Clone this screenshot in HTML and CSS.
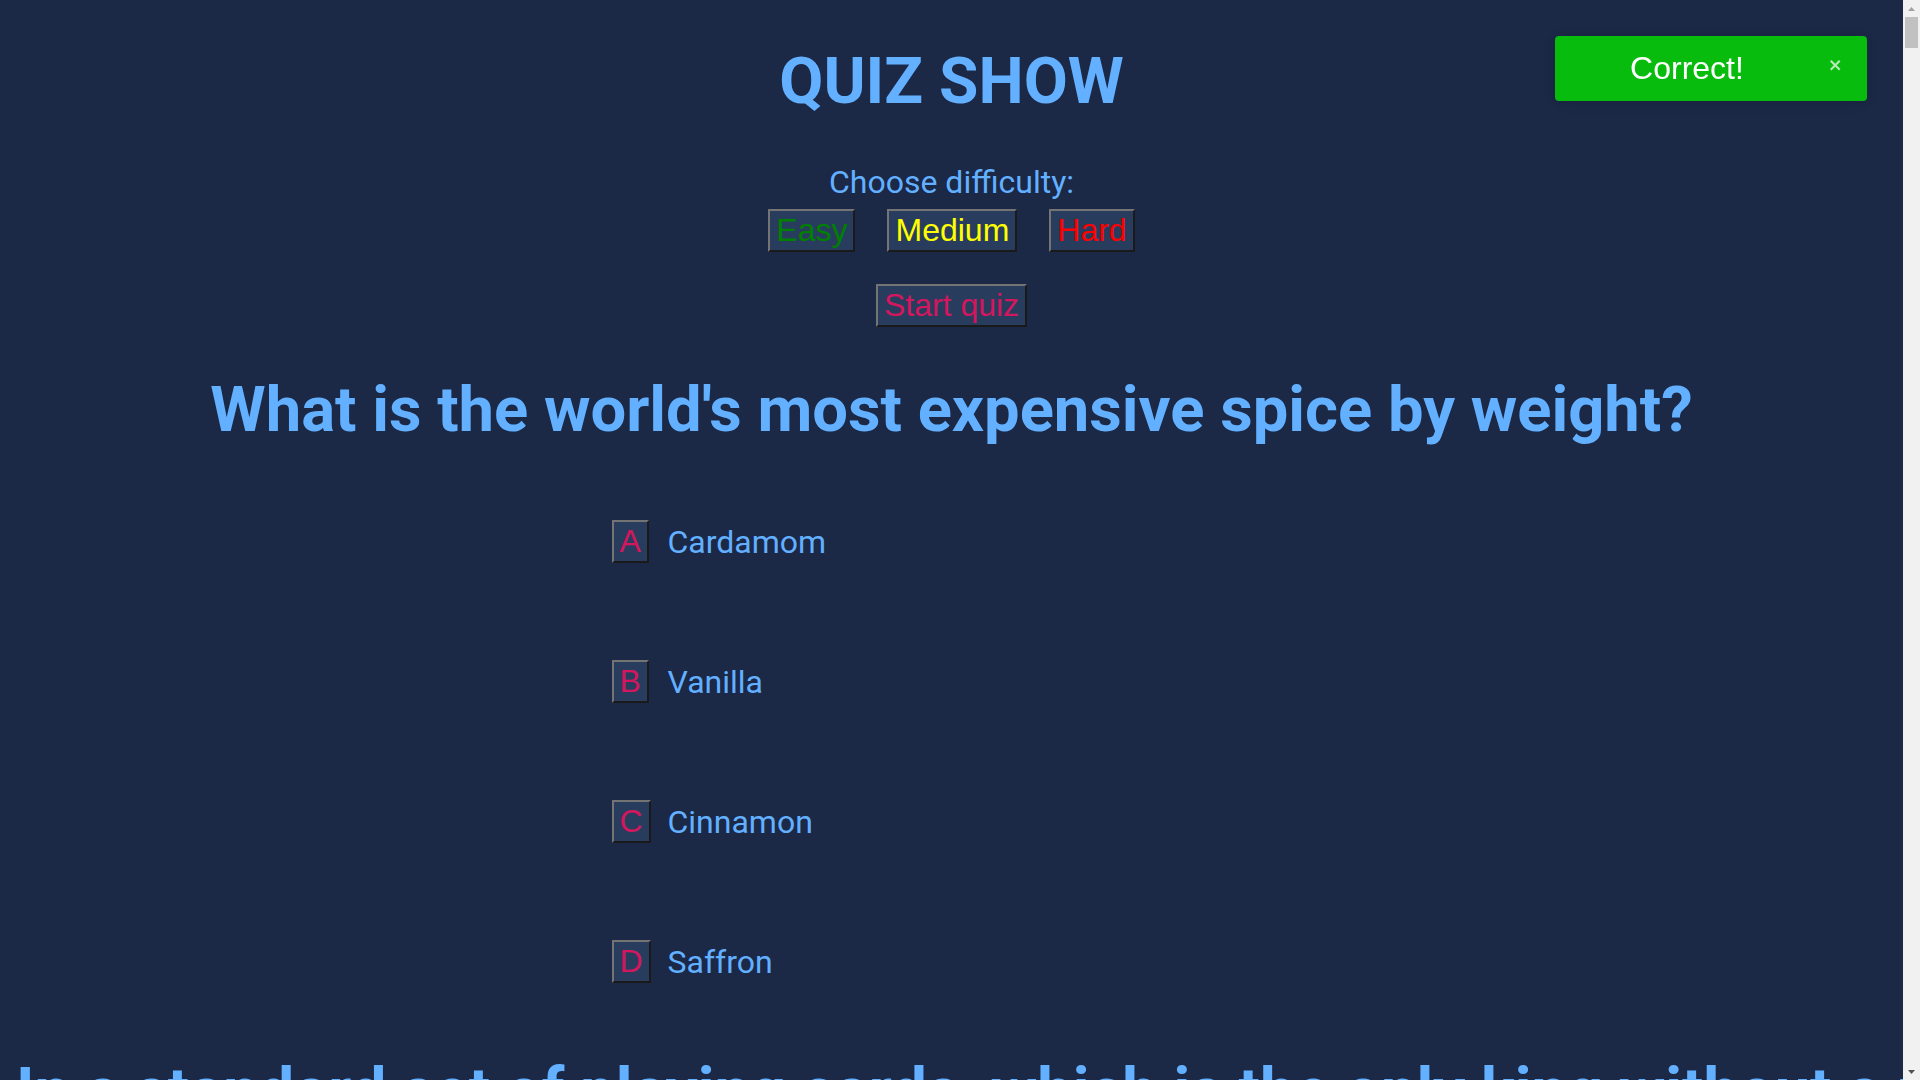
FILE: index.html
```html
<!DOCTYPE html>
<html lang="en">
<head>
<meta charset="utf-8">
<title>Quiz Show</title>
<link rel="stylesheet" href="styles.css">
</head>
<body>
<div class="app">
  <header class="top">
    <h1 class="title">QUIZ SHOW</h1>
    <p class="choose">Choose difficulty:</p>
    <div class="levels">
      <button class="btn easy">Easy</button>
      <button class="btn medium">Medium</button>
      <button class="btn hard">Hard</button>
    </div>
    <button class="btn start">Start quiz</button>
  </header>

  <div class="questions">
    <section class="q">
      <h2 class="q-text">What is the world's most expensive spice by weight?</h2>
      <ul class="answers">
        <li class="answer"><button class="btn letter">A</button><span class="answer-text">Cardamom</span></li>
        <li class="answer"><button class="btn letter">B</button><span class="answer-text">Vanilla</span></li>
        <li class="answer"><button class="btn letter">C</button><span class="answer-text">Cinnamon</span></li>
        <li class="answer"><button class="btn letter">D</button><span class="answer-text">Saffron</span></li>
      </ul>
    </section>
    <section class="q">
      <h2 class="q-text">In a standard set of playing cards, which is the only king without a moustache?</h2>
      <ul class="answers">
        <li class="answer"><button class="btn letter">A</button><span class="answer-text">Spades</span></li>
        <li class="answer"><button class="btn letter">B</button><span class="answer-text">Clubs</span></li>
        <li class="answer"><button class="btn letter">C</button><span class="answer-text">Diamonds</span></li>
        <li class="answer"><button class="btn letter">D</button><span class="answer-text">Hearts</span></li>
      </ul>
    </section>
  </div>
</div>

<div class="toast" role="alert">
  <div class="toast-body">Correct!</div>
  <button class="toast-close" aria-label="close">
    <svg width="14" height="16" viewBox="0 0 14 16" aria-hidden="true"><path fill="#ffffff" fill-rule="evenodd" d="M7.71 8.23l3.75 3.75-1.48 1.48-3.75-3.75-3.75 3.75L1 11.98l3.75-3.75L1 4.48 2.48 3l3.75 3.75L9.98 3l1.48 1.48-3.75 3.75z"/></svg>
  </button>
</div>

<div class="scrollbar" aria-hidden="true">
  <div class="sb-btn">
    <svg width="7" height="4" viewBox="0 0 7 4"><polygon points="0,4 3.5,0 7,4" fill="#a3a3a3"/></svg>
  </div>
  <div class="sb-thumb"></div>
  <div class="sb-track"></div>
  <div class="sb-btn">
    <svg width="7" height="4" viewBox="0 0 7 4"><polygon points="0,0 7,0 3.5,4" fill="#505050"/></svg>
  </div>
</div>
</body>
</html>
```

FILE: styles.css
```css
html, body {
  background: #1b2846;
}

body {
  margin: 0;
  padding-right: 17px;
  font-family: Roboto, "Liberation Sans", Arial, sans-serif;
  color: #62b0ff;
}

.app {
  overflow: hidden;
}

.top {
  display: flex;
  flex-direction: column;
  align-items: center;
}

.title {
  margin: 42px 0 0;
  font-size: 64px;
  line-height: 80px;
  font-weight: 700;
}

.choose {
  margin: 41px 0 0;
  font-size: 32px;
  line-height: 38px;
}

.levels {
  margin-top: 8px;
  display: flex;
  gap: 32px;
}

.btn {
  font-family: "Liberation Sans", Arial, sans-serif;
  font-size: 32px;
  line-height: 37px;
  padding: 1px 6px;
  margin: 0;
  background: #283d5e;
  border: 2px solid;
  border-color: #747474 #1a1a1a #1a1a1a #747474;
  border-radius: 0;
  cursor: pointer;
}

.easy { color: #008000; }
.medium { color: #ffff00; }
.hard { color: #ff0000; }

.start {
  margin-top: 32px;
  color: #d3165e;
}

.questions {
  padding: 42px 16px 40px;
  display: flex;
  flex-direction: column;
  gap: 67px;
  overflow: hidden;
}

.q-text {
  margin: 0;
  font-size: 63.3px;
  line-height: 80px;
  font-weight: 700;
  white-space: nowrap;
  text-align: center;
}

.answers {
  list-style: none;
  padding: 0;
  margin: 71px auto 0;
  width: 680px;
  display: flex;
  flex-direction: column;
  gap: 97px;
}

.answer {
  display: grid;
  grid-template-columns: 56px auto;
  align-items: center;
  justify-items: start;
}

.letter {
  color: #d3165e;
}

.answer-text {
  font-size: 32px;
  line-height: 38px;
}

.toast {
  position: fixed;
  top: 36px;
  right: 53px;
  width: 312px;
  height: 65px;
  box-sizing: border-box;
  background: #07bc0c;
  border-radius: 4px;
  display: flex;
  box-shadow: 0 1px 10px 0 rgba(0, 0, 0, 0.1), 0 2px 15px 0 rgba(0, 0, 0, 0.05);
}

.toast-body {
  flex: 1;
  display: flex;
  align-items: center;
  justify-content: center;
  color: #ffffff;
  font-family: "Liberation Sans", Arial, sans-serif;
  font-size: 32px;
}

.toast-close {
  width: 48px;
  padding: 21px 0 0 10px;
  margin: 0;
  box-sizing: border-box;
  background: none;
  border: none;
  opacity: 0.7;
  align-self: stretch;
  display: flex;
  align-items: flex-start;
  cursor: pointer;
}

.toast-close svg {
  display: block;
}

.scrollbar {
  position: fixed;
  top: 0;
  right: 0;
  width: 17px;
  height: 100vh;
  background: #f1f1f1;
  display: flex;
  flex-direction: column;
}

.sb-btn {
  height: 17px;
  display: flex;
  align-items: center;
  justify-content: center;
  flex: none;
}

.sb-btn svg {
  display: block;
}

.sb-thumb {
  height: 31px;
  margin: 0 2px;
  background: #c1c1c1;
  flex: none;
}

.sb-track {
  flex: 1;
}
```
